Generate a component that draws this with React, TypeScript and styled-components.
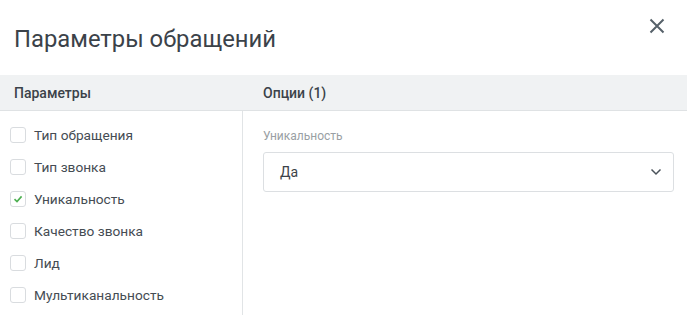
import { ReactElement } from 'react';
import styled, { createGlobalStyle } from 'styled-components';

const GlobalStyle = createGlobalStyle`
  html, body {
    margin: 0;
    padding: 0;
    background: #fff;
    font-family: Roboto, "Liberation Sans", Arial, sans-serif;
  }
`;

const Dialog = styled.div`
  width: 687px;
  height: 315px;
  overflow: hidden;
  background: #fff;
  display: flex;
  flex-direction: column;
`;

const Header = styled.div`
  height: 75px;
  display: flex;
  align-items: center;
  justify-content: space-between;
  padding: 0 20px 0 14px;
  box-sizing: border-box;
`;

const Title = styled.h1`
  margin: 0;
  font-size: 23.8px;
  font-weight: 400;
  color: #3b4249;
  position: relative;
  top: 1px;
`;

const CloseButton = styled.button`
  border: 0;
  background: none;
  padding: 0;
  width: 20px;
  height: 20px;
  display: flex;
  align-items: center;
  justify-content: center;
  cursor: pointer;
  position: relative;
  top: -12px;
`;

const Columns = styled.div`
  flex: 1;
  display: grid;
  grid-template-columns: 243px 1fr;
  grid-template-rows: 36px 1fr;
`;

const ColumnHead = styled.div<{ $pad: number }>`
  background: #f0f2f3;
  border-bottom: 1px solid #dfe2e4;
  display: flex;
  align-items: center;
  padding-left: ${(p) => p.$pad}px;
  font-size: 14px;
  font-weight: 500;
  color: #3b4249;
`;

const ParamList = styled.div`
  border-right: 1px solid #e1e4e6;
  display: flex;
  flex-direction: column;
  padding-top: 8px;
`;

const ParamRow = styled.label`
  height: 32px;
  display: flex;
  align-items: center;
  gap: 8px;
  padding-left: 10px;
  font-size: 13.7px;
  color: #454c53;
  cursor: pointer;
`;

const Box = styled.span`
  width: 14px;
  height: 14px;
  border: 1px solid #d9dcdf;
  border-radius: 3px;
  display: flex;
  align-items: center;
  justify-content: center;
  background: #fff;
  flex: 0 0 auto;
`;

const Options = styled.div`
  padding: 18px 13px 0 20px;
  display: flex;
  flex-direction: column;
`;

const FieldLabel = styled.div`
  font-size: 12px;
  color: #9a9fa4;
  margin-bottom: 9px;
`;

const Select = styled.div`
  height: 38px;
  border: 1px solid #dcdfe2;
  border-radius: 3px;
  display: flex;
  align-items: center;
  justify-content: space-between;
  padding: 0 11px 0 16px;
  font-size: 14px;
  color: #3b4249;
`;

const params = [
  { name: 'Тип обращения', checked: false },
  { name: 'Тип звонка', checked: false },
  { name: 'Уникальность', checked: true },
  { name: 'Качество звонка', checked: false },
  { name: 'Лид', checked: false },
  { name: 'Мультиканальность', checked: false },
];

const App = (): ReactElement => (
  <>
    <GlobalStyle />
    <Dialog>
      <Header>
        <Title>Параметры обращений</Title>
        <CloseButton aria-label="Закрыть">
          <svg width="16" height="16" viewBox="0 0 16 16">
            <path d="M1.5 1.5 L14.5 14.5 M14.5 1.5 L1.5 14.5" stroke="#56616a" strokeWidth="2" />
          </svg>
        </CloseButton>
      </Header>
      <Columns>
        <ColumnHead $pad={14}>Параметры</ColumnHead>
        <ColumnHead $pad={20}>Опции (1)</ColumnHead>
        <ParamList>
          {params.map((p) => (
            <ParamRow key={p.name}>
              <Box>
                {p.checked && (
                  <svg width="10" height="10" viewBox="0 0 10 10">
                    <path d="M1.5 5.2 L4 7.6 L8.6 2.4" fill="none" stroke="#4caf50" strokeWidth="1.6" />
                  </svg>
                )}
              </Box>
              {p.name}
            </ParamRow>
          ))}
        </ParamList>
        <Options>
          <FieldLabel>Уникальность</FieldLabel>
          <Select>
            Да
            <svg width="12" height="8" viewBox="0 0 12 8">
              <path d="M1.5 1.5 L6 6 L10.5 1.5" fill="none" stroke="#4a525a" strokeWidth="1.5" />
            </svg>
          </Select>
        </Options>
      </Columns>
    </Dialog>
  </>
);

export default App;
